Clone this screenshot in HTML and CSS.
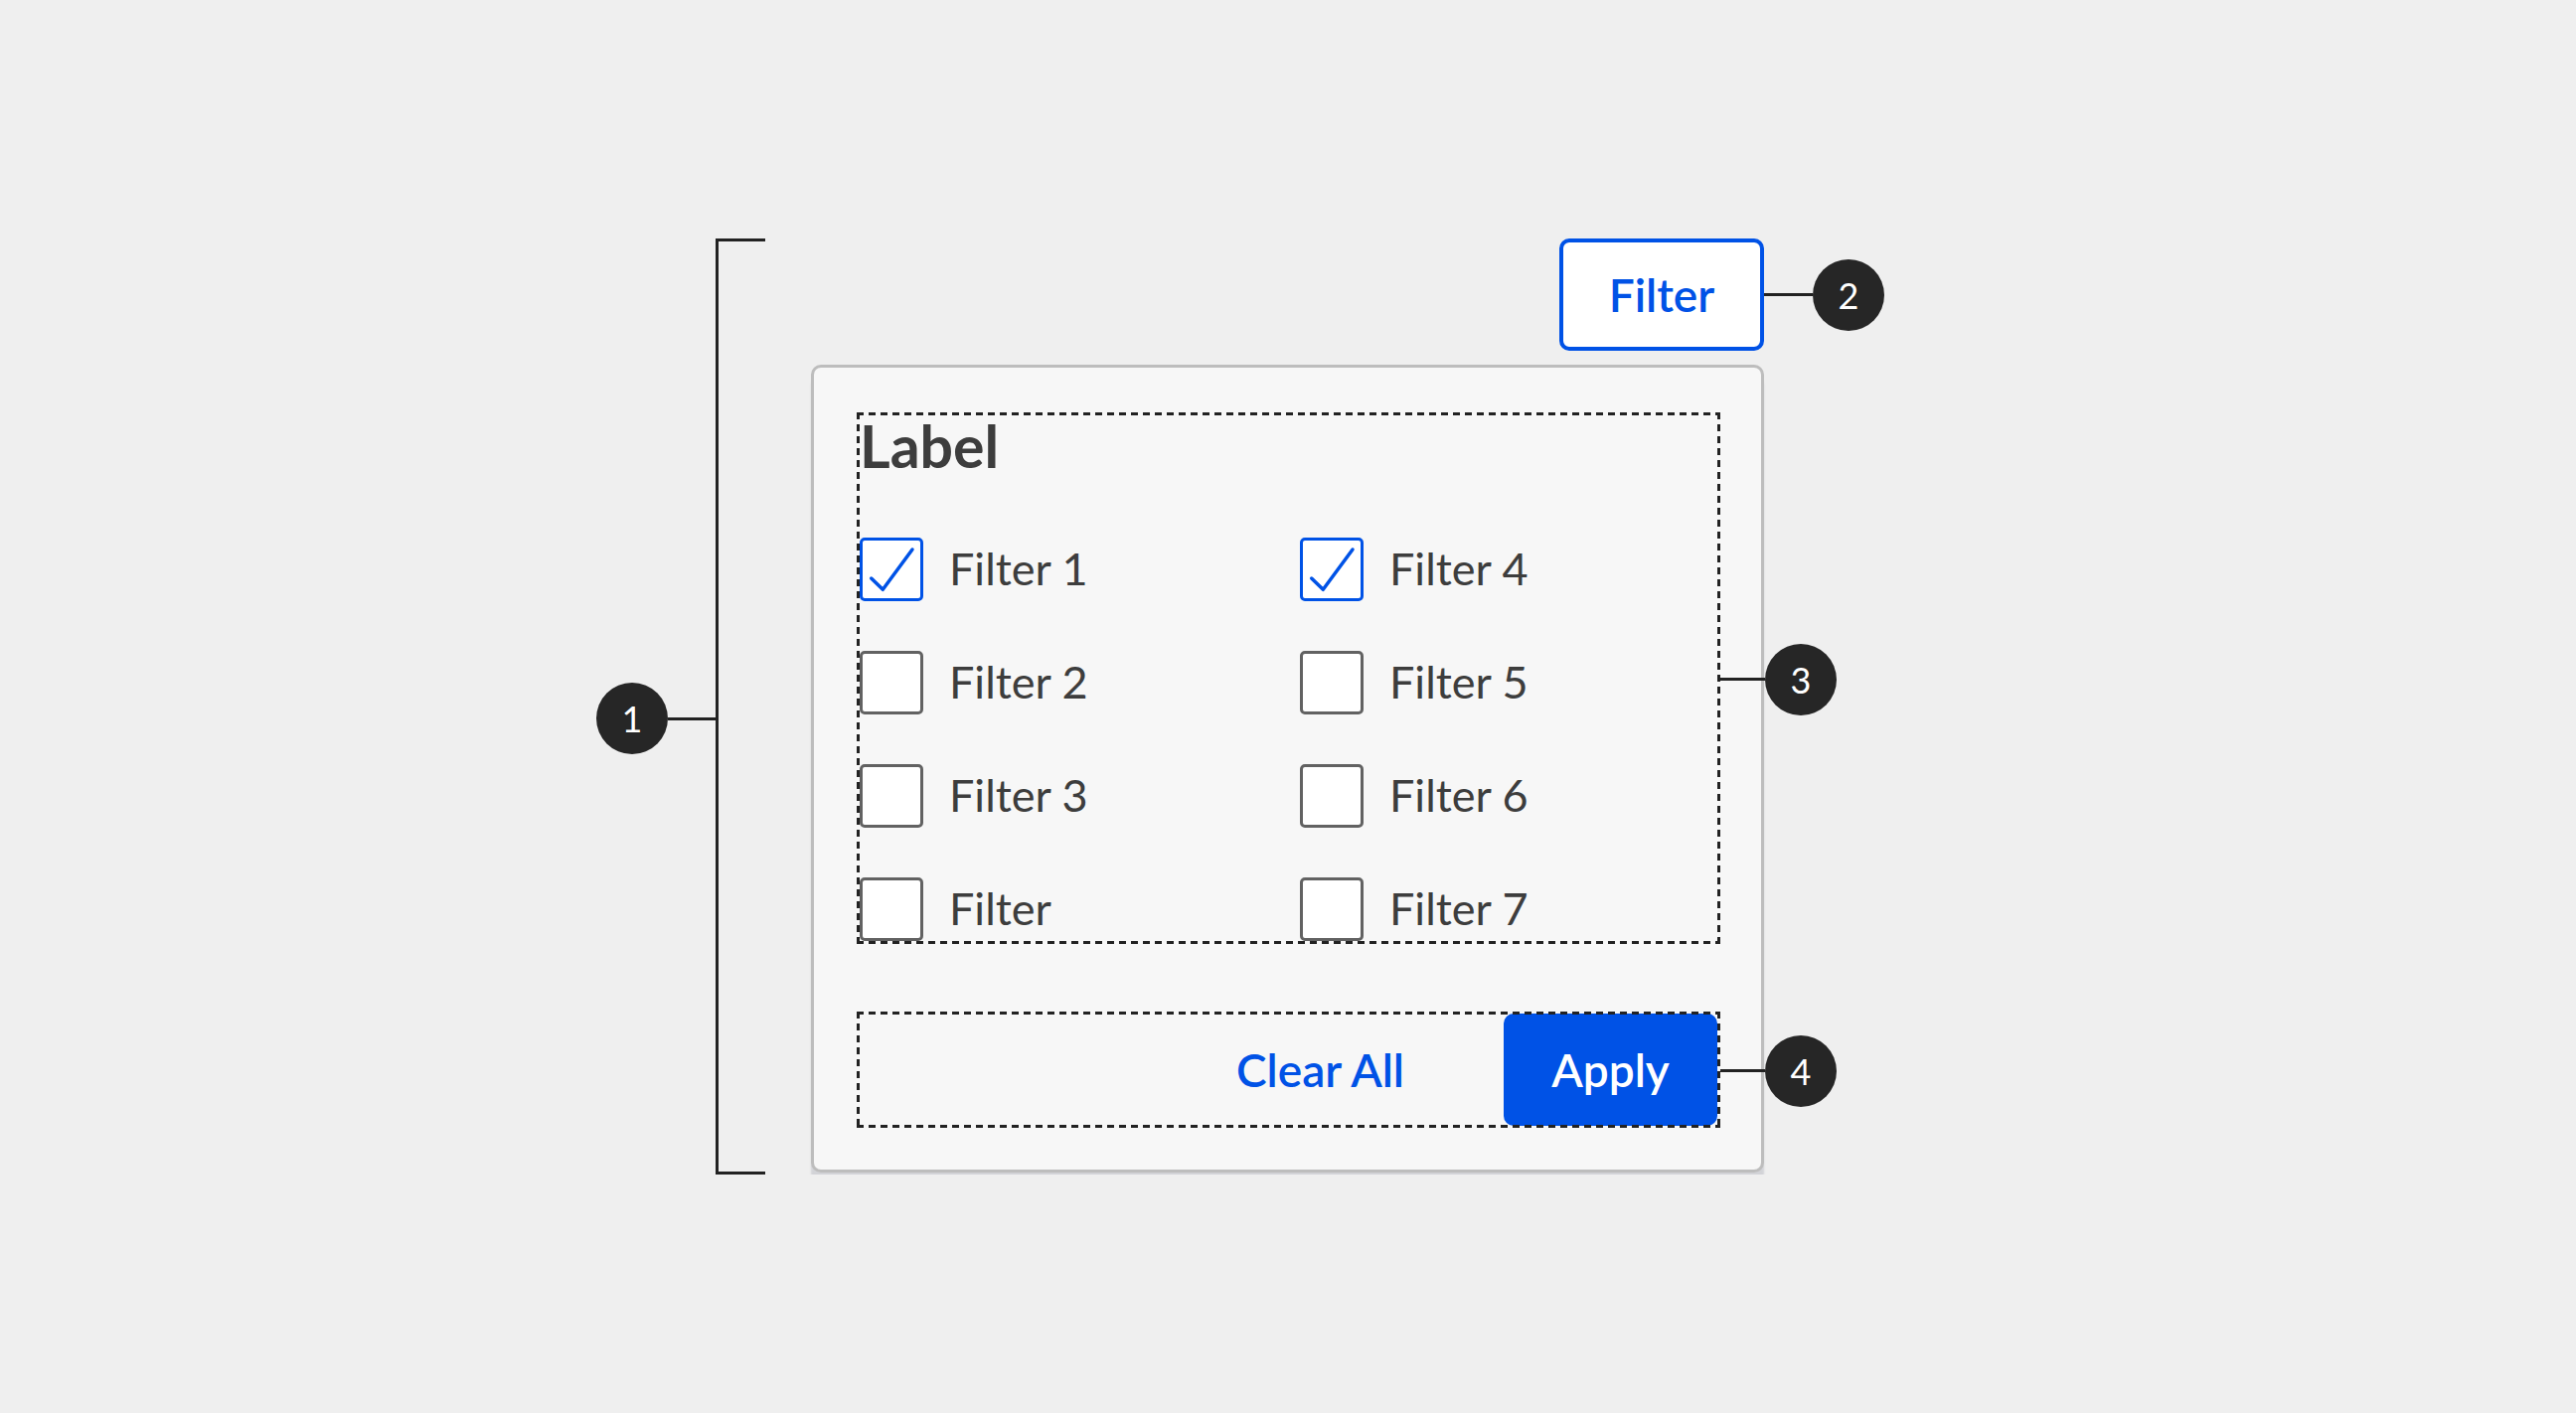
FILE: index.html
```html
<!DOCTYPE html>
<html lang="en">
  <head>
    <meta charset="UTF-8" />
    <meta name="viewport" content="width=device-width, initial-scale=1.0" />
    <title>Filter Panel Anatomy</title>
    <link rel="stylesheet" href="styles.css">
  </head>
  <body>
    <div class="figure">
      <div class="scope">
        <span class="badge badge-scope">1</span>
        <span class="leader leader-scope"></span>
        <div class="bracket"></div>
      </div>

      <div class="component">
        <div class="trigger-row">
          <button class="btn btn-outline">Filter</button>
          <span class="leader leader-trigger"></span>
          <span class="badge">2</span>
        </div>

        <div class="panel">
          <div class="group group-options">
            <div class="label">Label</div>
            <div class="options">
              <div class="option">
                <span class="box checked">
                  <svg viewBox="0 0 58 58"><polyline points="8.7,38 20.3,49.3 50,9" /></svg>
                </span>
                <span class="option-text">Filter 1</span>
              </div>
              <div class="option">
                <span class="box"></span>
                <span class="option-text">Filter 2</span>
              </div>
              <div class="option">
                <span class="box"></span>
                <span class="option-text">Filter 3</span>
              </div>
              <div class="option">
                <span class="box"></span>
                <span class="option-text">Filter</span>
              </div>
              <div class="option">
                <span class="box checked">
                  <svg viewBox="0 0 58 58"><polyline points="8.7,38 20.3,49.3 50,9" /></svg>
                </span>
                <span class="option-text">Filter 4</span>
              </div>
              <div class="option">
                <span class="box"></span>
                <span class="option-text">Filter 5</span>
              </div>
              <div class="option">
                <span class="box"></span>
                <span class="option-text">Filter 6</span>
              </div>
              <div class="option">
                <span class="box"></span>
                <span class="option-text">Filter 7</span>
              </div>
            </div>
            <div class="marker">
              <span class="leader leader-marker"></span>
              <span class="badge">3</span>
            </div>
          </div>

          <div class="group group-actions">
            <button class="btn btn-ghost">Clear All</button>
            <button class="btn btn-primary">Apply</button>
            <div class="marker">
              <span class="leader leader-marker"></span>
              <span class="badge">4</span>
            </div>
          </div>
        </div>
      </div>
    </div>
  </body>
</html>
```

FILE: styles.css
```css
body {
  font-family: "Lato", "Noto Sans", sans-serif;
  background-color: #efefef;
  color: #3d3d3d;
  margin: 0;
}

.figure {
  display: flex;
  align-items: flex-start;
  padding: 240px 0 0 600px;
}

/* annotation bits */
.badge {
  width: 72px;
  height: 72px;
  border-radius: 50%;
  background-color: #262626;
  color: #fff;
  font-size: 36px;
  line-height: 72px;
  text-align: center;
  flex-shrink: 0;
}

.leader {
  display: block;
  height: 3px;
  background-color: #222;
  flex-shrink: 0;
}

.scope {
  display: flex;
  align-items: flex-start;
  margin-right: 46px;
}

.badge-scope {
  margin-top: 447px;
}

.leader-scope {
  width: 48px;
  margin-top: 482px;
}

.bracket {
  width: 47px;
  height: 936px;
  border: 3px solid #222;
  border-right: none;
}

.component {
  width: 1080px;
}

.trigger-row {
  display: flex;
  justify-content: flex-end;
  align-items: center;
  margin-bottom: 14px;
}

.leader-trigger {
  width: 49px;
}

/* buttons */
.btn {
  font-family: inherit;
  font-size: 46px;
  font-weight: 600;
  border: none;
  background: none;
  padding: 0;
  cursor: pointer;
}

.btn-outline {
  width: 206px;
  height: 113px;
  border: 4px solid #0052e6;
  border-radius: 10px;
  background-color: #fff;
  color: #0052e6;
}

.btn-ghost {
  color: #0052e6;
  margin-right: 100px;
}

.btn-primary {
  width: 215px;
  height: 113px;
  border-radius: 10px;
  background-color: #0052e6;
  color: #fff;
}

/* panel */
.panel {
  width: 959px;
  box-sizing: border-box;
  background-color: #f7f7f7;
  border: 3px solid #bdbdbd;
  border-radius: 10px;
  box-shadow: 0 11px 2px #d2d3d7;
  padding: 44px 41px 42px 43px;
}

.group {
  position: relative;
}

.group::after {
  content: "";
  position: absolute;
  inset: 0;
  pointer-events: none;
  background:
    repeating-linear-gradient(90deg, #222 0 7px, transparent 7px 12px) top / 100% 3px no-repeat,
    repeating-linear-gradient(90deg, #222 0 7px, transparent 7px 12px) bottom / 100% 3px no-repeat,
    repeating-linear-gradient(180deg, #222 0 7px, transparent 7px 12px) left / 3px 100% no-repeat,
    repeating-linear-gradient(180deg, #222 0 7px, transparent 7px 12px) right / 3px 100% no-repeat;
}

.group-options {
  padding: 0 0 3px 3px;
  margin-bottom: 68px;
}

.label {
  font-size: 59px;
  font-weight: 700;
  line-height: 68px;
  margin: 1px 0 58px;
}

.options {
  display: grid;
  grid-auto-flow: column;
  grid-template-rows: repeat(4, 64px);
  grid-template-columns: 443px 1fr;
  row-gap: 50px;
}

.option {
  display: flex;
  align-items: center;
}

.box {
  width: 64px;
  height: 64px;
  box-sizing: border-box;
  border: 3px solid #626262;
  border-radius: 5px;
  background-color: #fff;
  margin-right: 26px;
}

.box.checked {
  border-color: #0052e6;
}

.box svg {
  display: block;
  width: 58px;
  height: 58px;
}

.box polyline {
  fill: none;
  stroke: #0052e6;
  stroke-width: 3.5;
  stroke-linecap: round;
  stroke-linejoin: round;
}

.option-text {
  font-size: 45px;
  padding-bottom: 3px;
}

.group-actions {
  display: flex;
  justify-content: flex-end;
  align-items: center;
  padding: 2px 3px;
}

.marker {
  position: absolute;
  left: 100%;
  top: calc(50% + 1px);
  transform: translateY(-50%);
  display: flex;
  align-items: center;
  z-index: 1;
}

.leader-marker {
  width: 45px;
}
```
